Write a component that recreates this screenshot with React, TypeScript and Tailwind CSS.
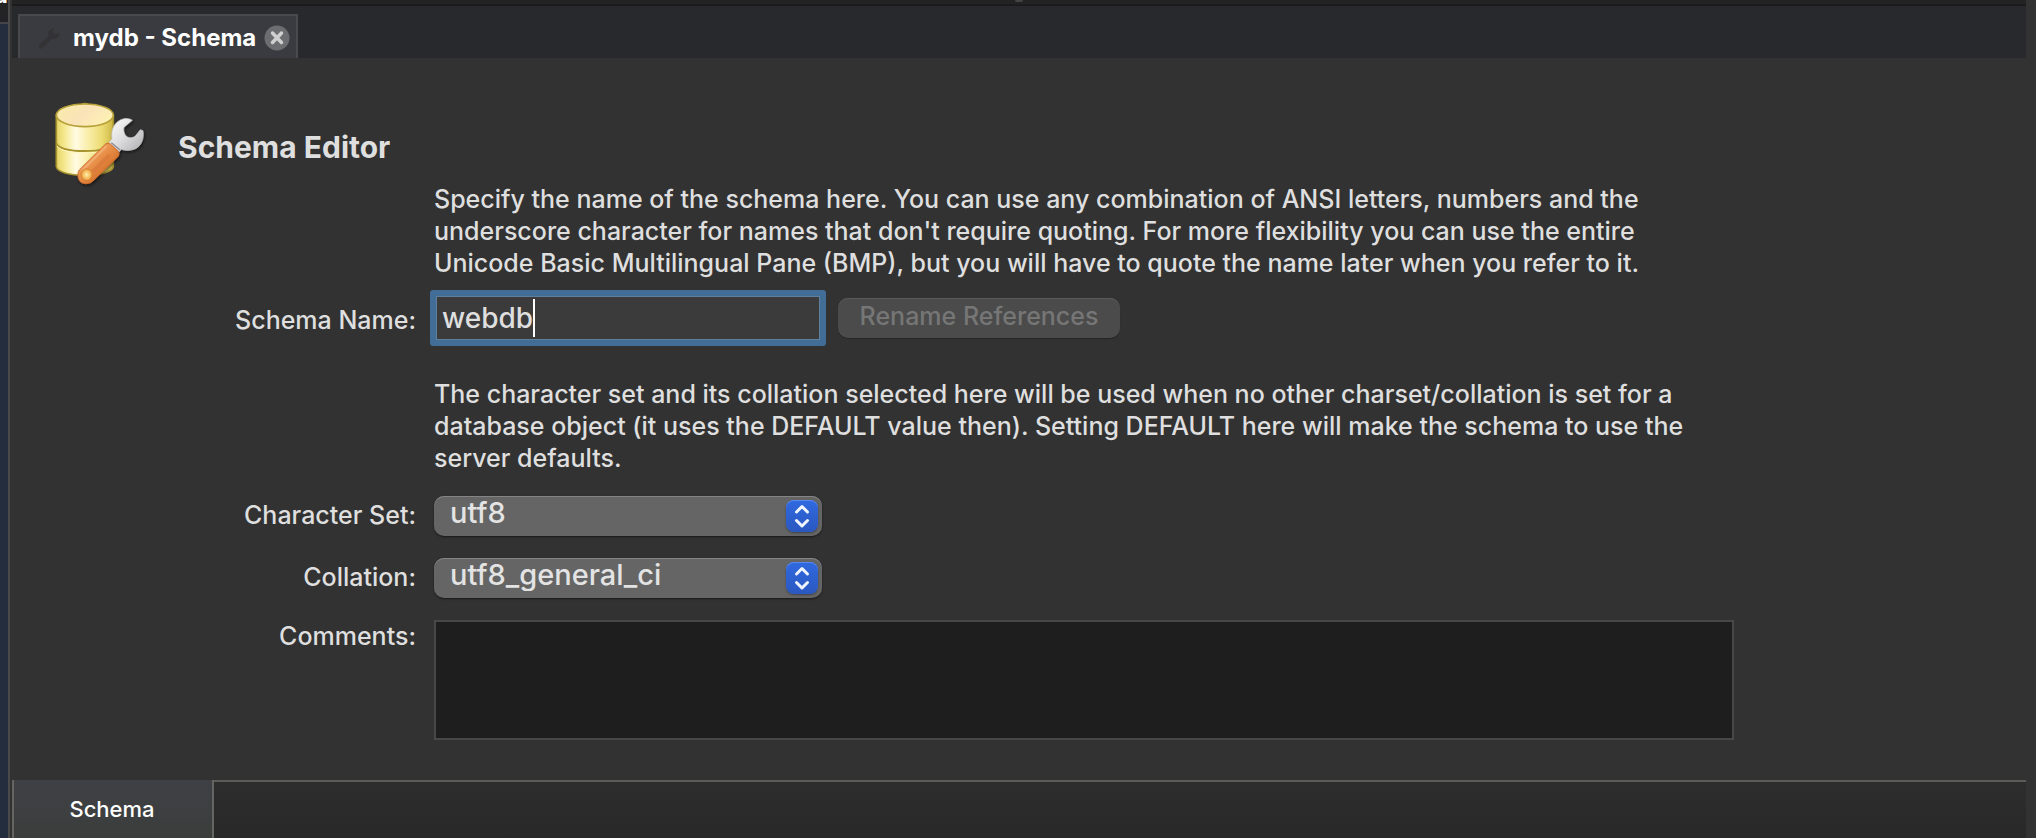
import { useState } from "react";
import type { ReactNode } from "react";

function SchemaIcon() {
  return (
    <svg viewBox="36 30 288 249" className="h-[83px] w-[96px] shrink-0 overflow-visible" aria-hidden="true">
      <defs>
        <linearGradient id="side" x1="0" x2="1" y1="0" y2="0">
          <stop offset="0" stopColor="#e6d468" />
          <stop offset="0.14" stopColor="#f5e88e" />
          <stop offset="0.34" stopColor="#fffbe4" />
          <stop offset="0.52" stopColor="#fbf1b4" />
          <stop offset="0.8" stopColor="#ecdc72" />
          <stop offset="1" stopColor="#cdb848" />
        </linearGradient>
        <linearGradient id="lid" x1="0" x2="1" y1="0.2" y2="0.6">
          <stop offset="0" stopColor="#f8ecaa" />
          <stop offset="0.5" stopColor="#fae3b8" />
          <stop offset="1" stopColor="#fdf2b4" />
        </linearGradient>
        <linearGradient id="handle" x1="0" x2="1" y1="0" y2="1">
          <stop offset="0.2" stopColor="#f3ae6e" />
          <stop offset="0.5" stopColor="#e58a42" />
          <stop offset="0.85" stopColor="#c9601f" />
        </linearGradient>
        <linearGradient id="steel" x1="0" x2="1" y1="0" y2="1">
          <stop offset="0" stopColor="#ffffff" />
          <stop offset="0.5" stopColor="#dcdcde" />
          <stop offset="1" stopColor="#a9a9ad" />
        </linearGradient>
        <radialGradient id="knob">
          <stop offset="0" stopColor="#fff0b0" />
          <stop offset="0.6" stopColor="#f5bf62" />
          <stop offset="1" stopColor="#e3903c" />
        </radialGradient>
        <filter id="soft" x="-20%" y="-20%" width="150%" height="150%">
          <feDropShadow dx="3" dy="5" stdDeviation="4" floodColor="#000" floodOpacity="0.55" />
        </filter>
      </defs>
      <path d="M49 76V230C52 246 88 256 134 256S217 246 220 230V76Z" fill="url(#side)" stroke="#a8942f" strokeWidth="5" />
      <path d="M49 160C56 176 92 183 134 183S212 176 220 160" fill="none" stroke="#a8942f" strokeWidth="6" />
      <path d="M51 168C60 182 94 189 134 189S208 182 218 168" fill="none" stroke="#fff7c0" strokeWidth="3" />
      <ellipse cx="134.500" cy="76" rx="85.500" ry="34" fill="url(#lid)" stroke="#b7a138" strokeWidth="5" />
      <path d="M124 42Q134 37 145 42" fill="none" stroke="#b7a138" strokeWidth="3" />
      <g filter="url(#soft)">
        <path
          d="M206 160L216 146C212 118 224 92 252 86C262 84 270 86 277 91L252 112C249 122 254 138 264 142C273 145 281 142 286 138L301 119L309 122C313 146 304 170 282 178C268 183 254 182 244 178L234 190Z"
          fill="url(#steel)"
          stroke="#c4c4c6"
          strokeWidth="2"
        />
        <path d="M214 158L240 180M209 164L234 186" stroke="#8c8c90" strokeWidth="4" />
        <path
          d="M197 162Q203 157 211 162L234 183Q240 190 235 199L158 274C150 282 130 284 121 275C112 266 112 250 118 240Z"
          fill="url(#handle)"
          stroke="#cf6c2a"
          strokeWidth="3"
        />
        <path d="M198 170L128 240" stroke="#f8c494" strokeWidth="6" strokeLinecap="round" opacity="0.5" />
        <path d="M205 198L162 242" stroke="#d9773a" strokeWidth="12" strokeLinecap="round" opacity="0.6" />
        <ellipse cx="140" cy="254" rx="17" ry="18" fill="url(#knob)" stroke="#d27a2c" strokeWidth="2" />
      </g>
    </svg>
  );
}

function WrenchGlyph() {
  return (
    <svg viewBox="0 0 24 24" className="h-6 w-6 shrink-0" aria-hidden="true">
      <path
        d="M2.500 18.500L11.500 10C10.500 6 13 2.500 17 2L15.500 6L18 8.500L22.500 6.500C23 10.500 19.500 13.500 15 12.500L6 22C4 24 .5 21 2.500 18.500Z"
        fill="#333335"
      />
    </svg>
  );
}

function CloseGlyph() {
  return (
    <svg viewBox="0 0 26 26" className="block h-[26px] w-[26px]" aria-hidden="true">
      <circle cx="13" cy="13" r="12.500" fill="#6c6d70" />
      <path d="M8.500 8L17.500 17.500M17.500 8L8.500 17.500" stroke="#d0d0d1" strokeWidth="3.500" strokeLinecap="round" />
    </svg>
  );
}

function Popup({ id, options }: { id: string; options: string[] }) {
  return (
    <div className="relative w-[388px]">
      <select
        id={id}
        defaultValue={options[0]}
        className="block h-10 w-full appearance-none rounded-[10px] bg-[#656565] pr-12 pb-[6px] pl-4 text-[29px] leading-8 font-medium text-[#e3e3e3] shadow-[inset_0_1px_0_#858585,0_1px_2px_rgba(0,0,0,0.5)] outline-none"
      >
        {options.map((o) => (
          <option key={o}>{o}</option>
        ))}
      </select>
      <span className="pointer-events-none absolute top-1 right-1 flex h-8 w-8 items-center justify-center rounded-lg bg-linear-to-b from-[#3069e0] to-[#2a58c0] shadow-[inset_0_1px_0_#5c8aec,0_1px_2px_rgba(0,0,0,0.35)]">
        <svg viewBox="0 0 32 32" className="h-8 w-8" aria-hidden="true">
          <path
            d="M10.500 12L16 6.500L21.500 12M10.500 20.500L16 26L21.500 20.500"
            fill="none"
            stroke="#f0f4fd"
            strokeWidth="3"
            strokeLinecap="round"
            strokeLinejoin="round"
          />
        </svg>
      </span>
    </div>
  );
}

function Label({ htmlFor, children }: { htmlFor: string; children: ReactNode }) {
  return (
    <label htmlFor={htmlFor} className="text-right text-[25px] leading-8 font-medium whitespace-nowrap">
      {children}
    </label>
  );
}

export default function App() {
  const [name, setName] = useState("webdb");
  return (
    <div className="flex min-h-screen bg-[#323232] font-['Inter',sans-serif] text-[#dfdfdf]">
      <aside className="flex w-[10px] shrink-0 flex-col border-r-2 border-[#4a4a4b] bg-[#232d3e]">
        <div className="flex h-6 items-start justify-end overflow-hidden border-b-2 border-[#444548] bg-[#232325]">
          <span className="-mt-[19px] text-[24px] leading-7 font-bold text-white">a</span>
        </div>
      </aside>

      <main className="flex min-w-0 grow flex-col pl-[2px]">
        <div className="mr-[10px] flex h-[6px] justify-center border-b-2 border-[#1b1b1c] bg-[#232323]">
          <span className="h-[2px] w-2 rounded-b-full bg-[#444444]" />
        </div>
        <div className="mr-[10px] flex h-[52px] items-end bg-[#28292d] pl-[6px]">
          <div className="flex h-11 items-center border-2 border-b-0 border-[#48494b] bg-[#3a3b40] pt-[2px] pr-[6px] pl-[17px]">
            <WrenchGlyph />
            <span className="mr-2 ml-3 text-[24px] leading-8 font-bold whitespace-nowrap text-white">
              mydb - Schema
            </span>
            <button type="button" aria-label="Close tab">
              <CloseGlyph />
            </button>
          </div>
        </div>

        <section className="grow pt-[42px] pb-10">
          <header className="flex h-[83px] items-start gap-[30px] pl-10">
            <SchemaIcon />
            <h1 className="mt-[27px] text-[30px] leading-10 font-bold whitespace-nowrap">Schema Editor</h1>
          </header>

          <form className="grid grid-cols-[404px_minmax(0,1fr)] gap-x-[18px]">
            <p className="col-start-2 text-[25px] leading-8 font-medium">
              Specify the name of the schema here. You can use any combination of ANSI letters, numbers and the
              <br />
              underscore character for names that don't require quoting. For more flexibility you can use the entire
              <br />
              Unicode Basic Multilingual Pane (BMP), but you will have to quote the name later when you refer to it.
            </p>

            <div className="mt-[15px] flex h-12 items-center justify-end pt-1">
              <Label htmlFor="name">Schema Name:</Label>
            </div>
            <div className="mt-[15px] flex items-center gap-4">
              <div className="relative w-[388px]">
                <input
                  id="name"
                  value={name}
                  onChange={(e) => setName(e.target.value)}
                  className="block h-12 w-full rounded-[1px] border-2 border-[#416d96] bg-[#3b3b3b] px-[6px] text-[28px] leading-9 font-medium caret-transparent shadow-[inset_0_0_0_1px_#5f7f9f] ring-4 ring-[#416d96] outline-none"
                />
                <div className="pointer-events-none absolute inset-y-0 left-2 flex items-center text-[28px] leading-9 font-medium">
                  <span className="invisible whitespace-pre" aria-hidden="true">
                    {name}
                  </span>
                  <span className="h-[38px] w-[2px] bg-white" />
                </div>
              </div>
              <button
                type="button"
                disabled
                className="h-10 w-[282px] rounded-[10px] bg-[#4b4b4b] pb-1 text-[25px] leading-8 font-medium whitespace-nowrap text-[#767676] shadow-[inset_0_1px_0_#5a5a5a,0_1px_1px_rgba(0,0,0,0.25)]"
              >
                Rename References
              </button>
            </div>

            <p className="col-start-2 mt-9 text-[25px] leading-8 font-medium">
              The character set and its collation selected here will be used when no other charset/collation is set for a
              <br />
              database object (it uses the DEFAULT value then). Setting DEFAULT here will make the schema to use the
              <br />
              server defaults.
            </p>

            <div className="mt-[22px] flex h-10 items-center justify-end pb-[2px]">
              <Label htmlFor="charset">Character Set:</Label>
            </div>
            <div className="mt-[22px]">
              <Popup id="charset" options={["utf8"]} />
            </div>

            <div className="mt-[22px] flex h-10 items-center justify-end pb-[2px]">
              <Label htmlFor="collation">Collation:</Label>
            </div>
            <div className="mt-[22px]">
              <Popup id="collation" options={["utf8_general_ci"]} />
            </div>

            <div className="mt-[22px] flex justify-end">
              <Label htmlFor="comments">Comments:</Label>
            </div>
            <textarea
              id="comments"
              className="mt-[22px] block h-[120px] w-full max-w-[1300px] resize-none border-2 border-[#474747] bg-[#1e1e1e] p-2 text-[25px] leading-8 outline-none"
            />
          </form>
        </section>

        <footer className="mr-[10px] flex h-[58px]">
          <button
            type="button"
            className="w-[202px] shrink-0 border-x-2 border-[#656562] bg-linear-to-b from-[#3f4045] to-[#3b3e3c] pr-[2px] text-[22px] leading-8 font-medium text-white"
          >
            Schema
          </button>
          <div className="grow border-t-2 border-[#5c5c58] bg-linear-to-b from-[#2d2d2d] to-[#282828]" />
        </footer>
      </main>
    </div>
  );
}
